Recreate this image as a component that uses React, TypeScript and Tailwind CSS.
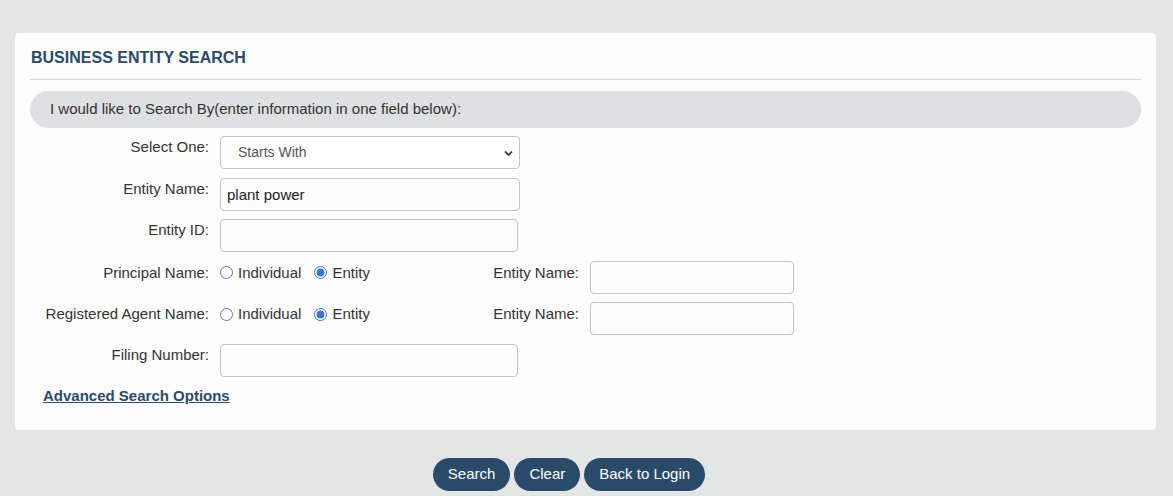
import React from 'react'

const font = { fontFamily: '"Liberation Sans", Arial, sans-serif' }

const Label = ({ children, w = 'w-[190px]', pt = 'pt-[1px]' }: { children: React.ReactNode; w?: string; pt?: string }) => (
  <div className={`${w} ${pt} shrink-0 pr-[11px] text-right text-[15px] leading-[20px] text-[#333]`}>{children}</div>
)

const Radio = ({ name, checked, label }: { name: string; checked?: boolean; label: string }) => (
  <label className="flex items-center gap-[5px] text-[15px] text-[#333]">
    <input type="radio" name={name} defaultChecked={checked} className="m-0 w-[13px] h-[13px] accent-[#3a72e0]" />
    {label}
  </label>
)

const App = () => {
  return (
    <div style={font} className="min-h-[496px] bg-[#e4e5e5] pt-[33px] pl-[15px] pr-[17px]">
      {/* card */}
      <div className="bg-[#fdfdfd] rounded-[4px] px-[15px] pt-[16px] pb-[24px]">
        <h1 className="pl-[1px] text-[16px] leading-[18px] font-bold text-[#2b4a6b] pb-[12px] border-b border-[#dcdcdc]">BUSINESS ENTITY SEARCH</h1>

        <div className="mt-[11px] h-[37px] rounded-full bg-[#dfe0e1] flex items-center pl-[20px] text-[15px] text-[#333]">
          I would like to Search By(enter information in one field below):
        </div>

        <div className="mt-[8px] flex flex-col gap-[8.6px]">
          <div className="flex items-start">
            <Label>Select One:</Label>
            <div className="relative w-[300px]">
              <select className="appearance-none w-full h-[33px] border border-[#c4c4c4] rounded-[4px] bg-white pl-[17px] text-[14px] text-[#555] outline-none" defaultValue="sw">
                <option value="sw">Starts With</option>
                <option value="c">Contains</option>
                <option value="e">Exact Match</option>
              </select>
              <svg className="absolute right-[7px] top-[14px] pointer-events-none" width="9" height="7" viewBox="0 0 9 7">
                <path d="M1 1.5 L4.5 5 L8 1.5" fill="none" stroke="#444" strokeWidth="1.8" />
              </svg>
            </div>
          </div>

          <div className="flex items-start">
            <Label>Entity Name:</Label>
            <input defaultValue="plant power" className="w-[300px] h-[33px] border border-[#c4c4c4] rounded-[4px] px-[6px] text-[15px] text-[#222] outline-none" />
          </div>

          <div className="flex items-start">
            <Label>Entity ID:</Label>
            <input className="w-[298px] h-[33px] border border-[#c4c4c4] rounded-[4px] px-[6px] text-[15px] outline-none" />
          </div>

          <div className="flex items-start">
            <Label pt="pt-[2px]">Principal Name:</Label>
            <div className="w-[260px] flex gap-[13px] h-[24px] items-center">
              <Radio name="principal" label="Individual" />
              <Radio name="principal" checked label="Entity" />
            </div>
            <Label w="w-[110px]" pt="pt-[2px]">Entity Name:</Label>
            <input className="w-[204px] h-[33px] border border-[#c4c4c4] rounded-[4px] px-[6px] text-[15px] outline-none" />
          </div>

          <div className="flex items-start">
            <Label pt="pt-[2px]">Registered Agent Name:</Label>
            <div className="w-[260px] flex gap-[13px] h-[24px] items-center">
              <Radio name="agent" label="Individual" />
              <Radio name="agent" checked label="Entity" />
            </div>
            <Label w="w-[110px]" pt="pt-[2px]">Entity Name:</Label>
            <input className="w-[204px] h-[33px] border border-[#c4c4c4] rounded-[4px] px-[6px] text-[15px] outline-none" />
          </div>

          <div className="flex items-start">
            <Label>Filing Number:</Label>
            <input className="w-[298px] h-[33px] border border-[#c4c4c4] rounded-[4px] px-[6px] text-[15px] outline-none" />
          </div>
        </div>

        <a href="#" className="block mt-[9px] ml-[13px] w-fit text-[15px] leading-[20px] font-bold text-[#2b4a6b] underline">Advanced Search Options</a>
      </div>

      {/* buttons */}
      <div className="mt-[28px] flex justify-center gap-[4px] pr-[33px]">
        <button className="h-[33px] px-[15px] rounded-full bg-[#2a4a6a] text-white text-[15px]">Search</button>
        <button className="h-[33px] px-[15px] rounded-full bg-[#2a4a6a] text-white text-[15px]">Clear</button>
        <button className="h-[33px] px-[15px] rounded-full bg-[#2a4a6a] text-white text-[15px]">Back to Login</button>
      </div>
    </div>
  )
}

export default App
